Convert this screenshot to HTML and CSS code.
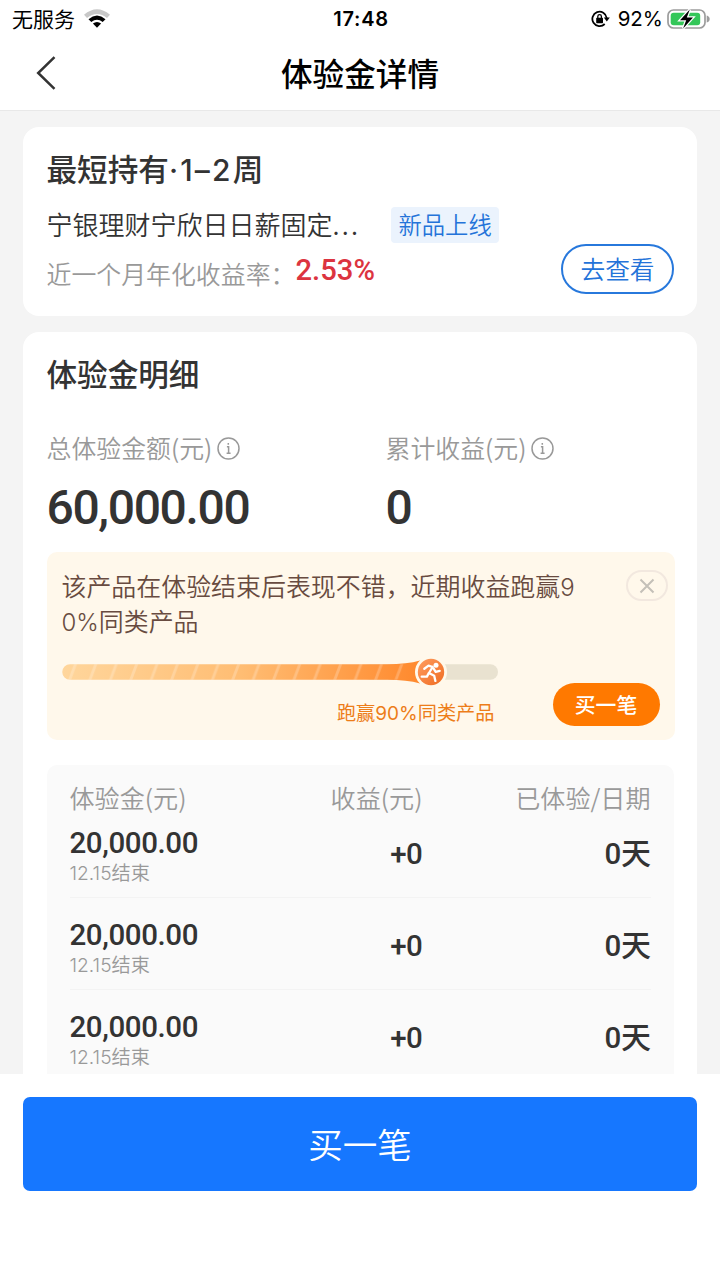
FILE: index.html
```html
<!DOCTYPE html>
<html lang="zh-CN">
<head>
<meta charset="utf-8">
<title>体验金详情</title>
<link rel="stylesheet" href="styles.css">
</head>
<body>
<div class="screen">
  <div class="status">
    <div class="status-left"><span class="carrier">无服务</span>
      <svg class="wifi" width="26" height="19" viewBox="0 0 26 19"><path d="M0 5.8Q13 -5.2 26 5.8L23 9Q13 .8 3 9Z" fill="#c8c8c8"/><path d="M4.5 10.2Q13 2.8 21.5 10.2L18.7 13.1Q13 8.3 7.3 13.1Z"/><path d="M8.9 14.6Q13 11.2 17.1 14.6L13 18.8Z"/></svg>
    </div>
    <span class="clock">17:48</span>
    <div class="status-right">
      <svg class="lock" width="19" height="18" viewBox="0 0 19 18"><path d="M15.7 8A7.2 7.2 0 1 0 13.7 14" fill="none" stroke="#000" stroke-width="1.8"/><path d="M12.8 7.6h6l-3 4z"/><rect x="5.2" y="7.8" width="6.8" height="5.4" rx=".6"/><path d="M6.8 8.3V6.4a1.8 1.8 0 0 1 3.6 0v1.9" fill="none" stroke="#000" stroke-width="1.3"/></svg>
      <span class="percent">92%</span>
      <svg class="battery" width="43" height="22" viewBox="0 0 43 22"><rect x="1" y="2" width="37" height="18" rx="5.5" fill="#fff" stroke="#9c9c9c" stroke-width="1.7"/><rect x="3.7" y="4.7" width="29.5" height="12.6" rx="3" fill="#34c759"/><path d="M39.7 7.5q3 1 3 3.5t-3 3.5z" fill="#9c9c9c"/><path d="M22.8 1.5 13 12.2h6.2l-3.1 8.3L26 9.5h-6.2z" stroke="#fff" stroke-width="2.5" paint-order="stroke"/></svg>
    </div>
  </div>
  <header class="nav">
    <svg class="back" width="20" height="34" viewBox="0 0 20 34"><path d="M18.5 1.2 2.2 17l16.3 15.8" fill="none" stroke="#333" stroke-width="2.5"/></svg>
    <h1>体验金详情</h1>
  </header>
  <main class="content">
    <section class="card product">
      <h2>最短持有<span class="latin">·1–2</span>周</h2>
      <div class="product-name"><span>宁银理财宁欣日日薪固定<span class="dots">...</span></span><em class="tag">新品上线</em></div>
      <div class="product-rate"><span class="rate-label">近一个月年化收益率：</span><strong>2.53%</strong><button class="view">去查看</button></div>
    </section>
    <section class="card details">
      <h2>体验金明细</h2>
      <div class="totals">
        <div>
          <div class="total-label"><span>总体验金额(元)</span><svg class="info" width="23" height="23" viewBox="0 0 23 23"><circle cx="11.5" cy="11.5" r="10.5"/><path d="M9.9 9.8h1.7v6.5m-2 0h4M11.3 6v1.8"/></svg></div>
          <div class="amount">60,000.00</div>
        </div>
        <div>
          <div class="total-label"><span>累计收益(元)</span><svg class="info" width="23" height="23" viewBox="0 0 23 23"><circle cx="11.5" cy="11.5" r="10.5"/><path d="M9.9 9.8h1.7v6.5m-2 0h4M11.3 6v1.8"/></svg></div>
          <div class="amount">0</div>
        </div>
      </div>
      <div class="promo">
        <div class="promo-top">
          <p>该产品在体验结束后表现不错，近期收益跑赢<span class="latin">9</span><br><span class="latin">0%</span>同类产品</p>
          <button class="close"><svg width="16" height="16" viewBox="0 0 16 16"><path d="m1.5 1.5 13 13m0-13-13 13" fill="none" stroke="#c4c0b8" stroke-width="2"/></svg></button>
        </div>
        <div class="promo-bottom">
          <div class="progress">
            <svg width="437" height="30" viewBox="0 0 437 30">
              <defs>
                <linearGradient id="run"><stop stop-color="#ffd69c"/><stop offset=".5" stop-color="#ffbd73"/><stop offset="1" stop-color="#ff892d"/></linearGradient>
                <pattern id="stripes" width="20.4" height="16" patternUnits="userSpaceOnUse" patternTransform="translate(4 7)"><path d="m2 16 6-16h3L5 16z" fill="#fff" opacity=".22"/></pattern>
                <linearGradient id="badge" x1="0" y1="0" x2="1" y2="1"><stop stop-color="#ff9d61"/><stop offset="1" stop-color="#ef6c21"/></linearGradient>
              </defs>
              <rect x="300" y="7.3" width="136" height="15.5" rx="7.7" fill="#e9e2d0"/>
              <path d="M8 7.3H325Q345 7.3 358 3.5V26.5Q345 22.8 325 22.8H8A7.7 7.7 0 0 1 8 7.3Z" fill="url(#run)"/>
              <path d="M8 7.3H345V22.8H8A7.7 7.7 0 0 1 8 7.3Z" fill="url(#stripes)"/>
              <circle cx="369" cy="15" r="16" fill="#fff9eb"/>
              <circle cx="369" cy="15" r="13.2" fill="url(#badge)"/>
              <circle cx="374" cy="8.2" r="2.5" fill="#fff"/>
              <path d="m370.8 10-4.3-1.4-4.2 3.1m8.3-1.7-3.6 6 5.2 2.7 1.2 5.2m-6.5-8-2 3.7-5.2.1m11.8-8.3 2.2 3.4 4-1" fill="none" stroke="#fff" stroke-width="2.3" stroke-linecap="round" stroke-linejoin="round"/>
            </svg>
            <div class="progress-label">跑赢<span class="latin">90%</span>同类产品</div>
          </div>
          <button class="buy-small">买一笔</button>
        </div>
      </div>
      <div class="table">
        <div class="row head"><span>体验金(元)</span><span>收益(元)</span><span>已体验/日期</span></div>
        <div class="row"><div><b>20,000.00</b><small><span class="latin">12.15</span>结束</small></div><b>+0</b><b>0<i>天</i></b></div>
        <div class="row"><div><b>20,000.00</b><small><span class="latin">12.15</span>结束</small></div><b>+0</b><b>0<i>天</i></b></div>
        <div class="row"><div><b>20,000.00</b><small><span class="latin">12.15</span>结束</small></div><b>+0</b><b>0<i>天</i></b></div>
      </div>
    </section>
  </main>
  <footer class="footer"><button class="buy">买一笔</button></footer>
</div>
</body>
</html>
```
FILE: styles.css
```css
* { box-sizing: border-box; }
body, h1, h2, p { margin: 0; }
body { background: #fff; color: #333; font-family: "Noto Sans CJK SC", sans-serif; }
button { font-family: inherit; padding: 0 0 3px; border: 0; display: flex; align-items: center; justify-content: center; }
svg { display: block; flex: none; }
.latin { font-family: Inter, sans-serif; line-height: 0; }
.screen { width: 720px; height: 1280px; display: flex; flex-direction: column; overflow: hidden; }

.status { height: 37px; flex: none; display: grid; grid-template-columns: 1fr auto 1fr; align-items: center; padding: 0 10px 0 12px; color: #000; line-height: 37px; }
.status-left { display: flex; align-items: center; gap: 9px; }
.carrier { font-size: 21px; line-height: 33px; padding-bottom: 3px; }
.wifi { margin-bottom: 3px; }
.clock { font-family: Inter, sans-serif; font-weight: 600; font-size: 20px; letter-spacing: .7px; }
.status-right { display: flex; align-items: center; justify-content: flex-end; padding-bottom: 2px; }
.lock { margin-right: 8px; }
.percent { font-family: Inter, sans-serif; font-size: 20.5px; margin-right: 4px; }

.nav { height: 74px; flex: none; display: grid; grid-template-columns: 1fr auto 1fr; align-items: center; padding: 0 36px; border-bottom: 1px solid #e8e8e8; }
.nav h1 { color: #000; font-size: 31.6px; line-height: 70px; padding-bottom: 3px; font-weight: 500; }
.back { margin-bottom: 1px; }

.content { flex: 1; min-height: 0; overflow: hidden; background: #f4f4f4; padding: 16px 23px 0; display: flex; flex-direction: column; gap: 16px; }
.card { flex: none; background: #fff; border-radius: 16px; padding: 19px 23px 0 23.5px; }
.card h2 { font-size: 30.6px; font-weight: 500; line-height: 44px; }

.product { height: 189px; }
.product .latin { font-size: 30px; letter-spacing: 2.2px; }
.product-name { display: flex; align-items: center; gap: 31px; height: 36px; margin-top: 17px; font-size: 26px; font-weight: 350; line-height: 33px; white-space: nowrap; }
.product-name > span { padding-bottom: 3px; }
.dots { letter-spacing: 2.2px; }
.tag { height: 36px; width: 108px; border-radius: 4px; background: #ebf3fd; color: #2473d9; font-style: normal; font-size: 23.3px; line-height: 34px; text-align: center; }
.product-rate { display: flex; height: 52px; align-items: center; }
.rate-label { color: #999; font-size: 24.9px; font-weight: 350; width: 249px; padding-top: 7px; white-space: nowrap; }
.product-rate strong { flex: 1; font: 500 29.2px Roboto, sans-serif; color: #dc3440; padding-top: 1px; }
.view { width: 113px; height: 50px; border: 2px solid #2778dc; border-radius: 25px; color: #2473d9; background: #fff; font-size: 24.7px; font-weight: 350; }

.details { height: 900px; }
.totals { display: grid; grid-template-columns: 339px 1fr; margin-top: 33px; }
.total-label { display: flex; align-items: center; gap: 5px; height: 40px; color: #999; font-size: 24.9px; font-weight: 350; }
.total-label span { padding-bottom: 2px; }
.info { fill: none; stroke: #999; stroke-width: 1.5; }
.amount { font: 500 48px/60px Roboto, sans-serif; letter-spacing: -1.35px; height: 60px; margin-top: 10px; }

.promo { height: 188px; margin-top: 14px; width: 628px; border-radius: 10px; background: #fff8eb; padding: 16px 7px 0 15px; }
.promo-top { display: flex; justify-content: space-between; align-items: flex-start; }
.promo p { color: #684b40; font-size: 24.95px; font-weight: 350; line-height: 35px; white-space: nowrap; }
.promo .latin { font-size: 24px; }
.close { width: 42px; height: 31px; margin-top: 2px; padding: 0; background: transparent; border: 2px solid #f2e8df; border-radius: 16px; }
.promo-bottom { display: flex; justify-content: space-between; align-items: flex-start; margin-top: 19px; padding-right: 8px; }
.progress { width: 437px; }
.progress-label { color: #ed7d19; text-align: right; padding-right: 4px; font-size: 19.2px; line-height: 28px; margin-top: 11px; }
.promo .progress-label .latin { font-size: 19px; }
.buy-small { width: 107px; height: 43px; margin-top: 26px; border-radius: 22px; background: #ff7900; color: #fff; font-size: 20.8px; font-weight: 500; padding-bottom: 1px; }

.table { width: 627px; margin-top: 25px; height: 400px; background: #fafafa; border-radius: 10px; padding: 14px 23px 0; }
.row { display: grid; grid-template-columns: 200px 153px 1fr; height: 92px; align-items: start; border-bottom: 1px solid #f3f3f3; }
.row > :nth-child(n+2) { text-align: right; }
.head { height: 27px; border: 0; color: #999; font-size: 25.1px; font-weight: 350; line-height: 36px; }
.row b { display: block; font: 500 29.5px/36px Roboto, sans-serif; letter-spacing: -.4px; }
.row > b { padding-top: 30px; }
.row i { font: 500 30px/0 "Noto Sans CJK SC", sans-serif; }
.row small { display: block; color: #999; font-size: 19.2px; line-height: 22px; font-weight: 350; }
.row > div { padding-top: 19px; }

.footer { flex: none; height: 206px; padding: 23px 23px 0; background: #fff; }
.buy { width: 674px; height: 94px; border-radius: 7px; background: #1677ff; color: #fff; font-size: 34.5px; font-weight: 350; padding-bottom: 2px; }
```
